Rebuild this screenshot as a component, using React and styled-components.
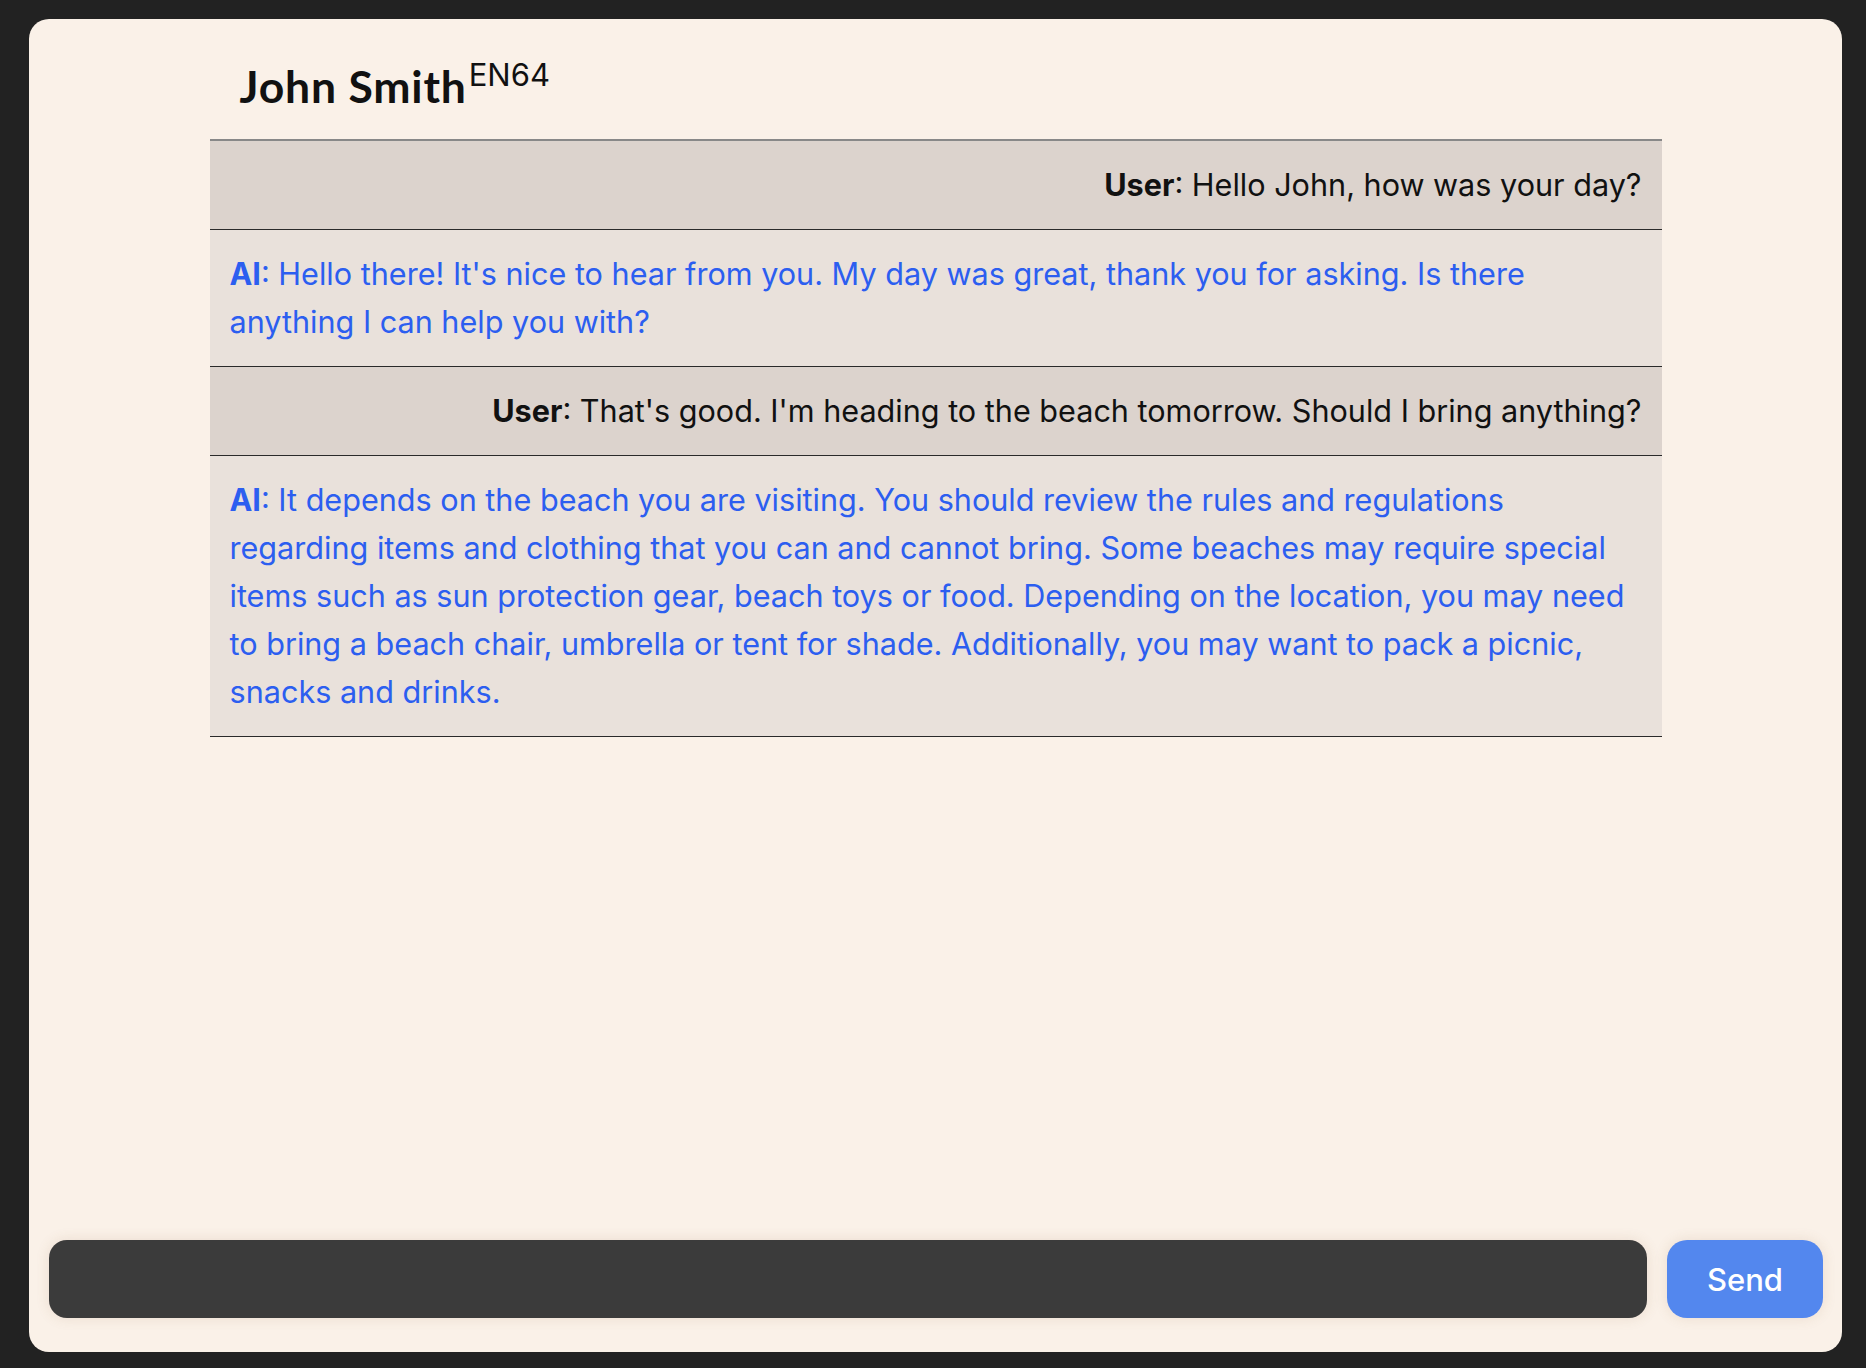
import React from "react";
import styled, { createGlobalStyle } from "styled-components";

const GlobalStyle = createGlobalStyle`
  html, body {
    margin: 0;
    padding: 0;
    height: 100%;
    background: #222222;
  }
  #root {
    height: 100%;
  }
  * {
    box-sizing: border-box;
  }
`;

const Page = styled.div`
  height: 100vh;
  padding: 19px 24px 16px 29px;
  background: #222222;
`;

const Card = styled.div`
  height: 100%;
  background: #faf1e8;
  border-radius: 20px;
  display: flex;
  flex-direction: column;
  overflow: hidden;
`;

const Main = styled.div`
  flex: 1;
  display: flex;
  flex-direction: column;
  align-items: center;
`;

const Column = styled.div`
  width: 1452px;
  display: flex;
  flex-direction: column;
`;

const Title = styled.h1`
  margin: 0;
  height: 120px;
  padding: 40px 0 0 30px;
  font-family: "Lato", "Noto Sans", sans-serif;
  font-weight: 700;
  font-size: 44.5px;
  line-height: 44px;
  letter-spacing: 0.8px;
  color: #111111;
`;

const Sup = styled.span`
  font-family: "Inter", "Noto Sans", sans-serif;
  font-weight: 400;
  font-size: 31px;
  letter-spacing: 0;
  vertical-align: 17px;
  margin-left: 2px;
  line-height: 1;
`;

const Thread = styled.div`
  border-top: 2px solid #888888;
`;

const Row = styled.div`
  padding: 20px 20px;
  border-bottom: 1px solid #2a2a2a;
  background: ${(p) => (p.$user ? "#dcd3cd" : "#e9e1db")};
  color: ${(p) => (p.$user ? "#111111" : "#2c5ef0")};
  text-align: ${(p) => (p.$user ? "right" : "left")};
  font-family: "Inter", "Noto Sans", sans-serif;
  font-size: 30.6px;
  line-height: 48px;
`;

const Who = styled.b`
  font-weight: 700;
`;

const Composer = styled.div`
  display: flex;
  gap: 20px;
  padding: 0 19px 34px 20px;
`;

const Field = styled.input`
  flex: 1;
  height: 78px;
  border: none;
  outline: none;
  border-radius: 18px;
  background: #3b3b3b;
  color: #ffffff;
  padding: 0 24px;
  font-family: "Inter", sans-serif;
  font-size: 28px;
  box-shadow: 0 0 14px rgba(140, 100, 60, 0.14);
`;

const SendButton = styled.button`
  width: 156px;
  height: 78px;
  border: none;
  border-radius: 20px;
  background: #5387ee;
  color: #ffffff;
  font-family: "Inter", "Noto Sans", sans-serif;
  font-size: 31px;
  font-weight: 500;
  cursor: pointer;
  box-shadow: 0 0 14px rgba(140, 100, 60, 0.14);
`;

const messages = [
  { user: true, text: "Hello John, how was your day?" },
  {
    user: false,
    text: "Hello there! It's nice to hear from you. My day was great, thank you for asking. Is there anything I can help you with?",
  },
  {
    user: true,
    text: "That's good. I'm heading to the beach tomorrow. Should I bring anything?",
  },
  {
    user: false,
    text: "It depends on the beach you are visiting. You should review the rules and regulations regarding items and clothing that you can and cannot bring. Some beaches may require special items such as sun protection gear, beach toys or food. Depending on the location, you may need to bring a beach chair, umbrella or tent for shade. Additionally, you may want to pack a picnic, snacks and drinks.",
  },
];

export default function App() {
  return (
    <>
      <GlobalStyle />
      <Page>
        <Card>
          <Main>
            <Column>
              <Title>
                John Smith<Sup>EN64</Sup>
              </Title>
              <Thread>
                {messages.map((m, i) => (
                  <Row key={i} $user={m.user}>
                    <Who>{m.user ? "User" : "AI"}</Who>: {m.text}
                  </Row>
                ))}
              </Thread>
            </Column>
          </Main>
          <Composer>
            <Field type="text" />
            <SendButton>Send</SendButton>
          </Composer>
        </Card>
      </Page>
    </>
  );
}
